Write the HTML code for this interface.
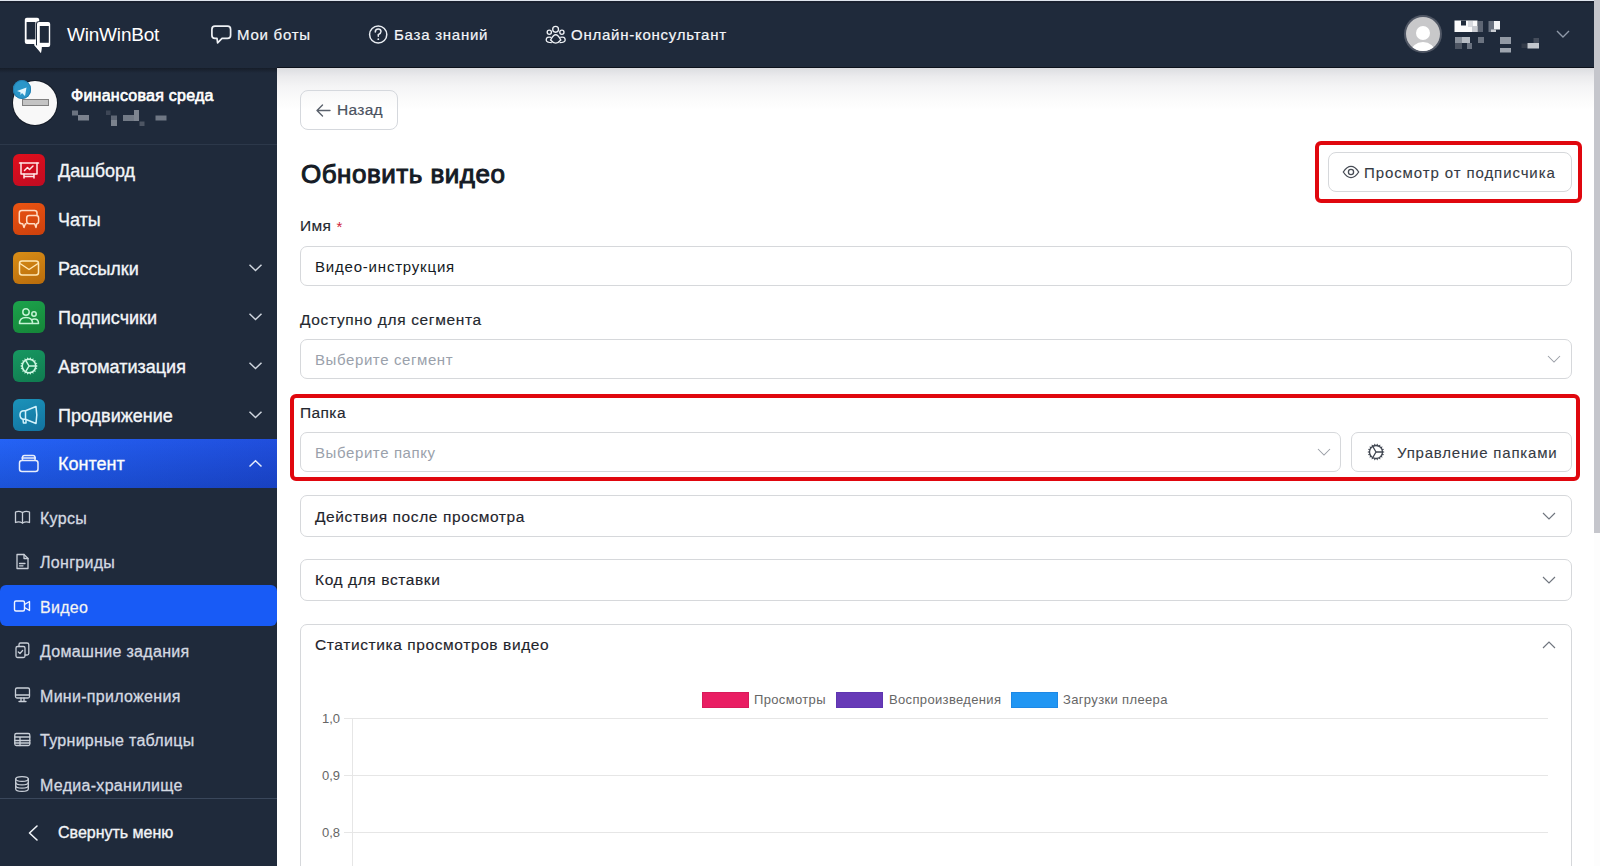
<!DOCTYPE html>
<html lang="ru">
<head>
<meta charset="utf-8">
<title>WinWinBot — Обновить видео</title>
<style>
*{box-sizing:border-box;margin:0;padding:0}
html,body{width:1600px;height:866px;overflow:hidden;background:#fff;font-family:"Liberation Sans",sans-serif}
.a{position:absolute}
.t{position:absolute;white-space:nowrap;line-height:1}
svg{position:absolute;overflow:visible}
#topline{left:0;top:0;width:1600px;height:1px;background:#dfe5ee}
#header{left:0;top:1px;width:1594px;height:67px;background:#1f2a3b}
#hedge{left:0;top:1px;width:1594px;height:2px;background:#1a2130}
#sidebar{left:0;top:68px;width:277px;height:798px;background:#1f2a3b}
#main{left:277px;top:68px;width:1317px;height:798px;background:#fff}
#shadow{left:277px;top:68px;width:1317px;height:42px;background:linear-gradient(#dcdde1,#ebebed 20%,#f5f5f6 45%,#fbfbfb 75%,#fff)}
#scroll{left:1594px;top:0;width:6px;height:866px;background:#fdfdfd}
#thumb{left:1594px;top:0;width:6px;height:533px;background:#c5c6cc}
.hn{color:#f4f6f9;font-size:15px;top:27px;letter-spacing:0.75px;-webkit-text-stroke:0.2px #f4f6f9}
.ibox{left:13px;width:32px;height:32px;border-radius:6px}
.mi{left:58px;font-size:18px;color:#f3f5f8;-webkit-text-stroke:0.35px #f3f5f8}
.si{left:40px;font-size:16px;color:#d4d9e1;letter-spacing:0.3px;-webkit-text-stroke:0.3px #d4d9e1}
.lbl{left:300px;font-size:15.5px;color:#24282f;-webkit-text-stroke:0.15px #24282f}
.box{position:absolute;border:1px solid #d6d8db;border-radius:7px;background:#fff}
.ph{font-size:15px;color:#9aa1ab}
.sb{-webkit-text-stroke:0.3px currentColor}
.acc{font-size:15.5px;color:#1f242c;-webkit-text-stroke:0.15px #1f242c}
.red{position:absolute;border:4px solid #e0070e;border-radius:6px}
</style>
</head>
<body>
<div class="a" id="main"></div>
<div class="a" id="shadow"></div>
<div class="a" id="sidebar"></div>
<div class="a" style="left:0;top:68px;width:277px;height:5px;background:linear-gradient(#161d29,rgba(31,42,59,0))"></div>
<div class="a" id="header"></div>
<div class="a" id="hedge"></div>
<div class="a" style="left:277px;top:67px;width:1317px;height:1px;background:#0d121c"></div>
<div class="a" id="topline"></div>
<div class="a" id="scroll"></div>
<div class="a" id="thumb"></div>
<!-- HEADER -->
<svg style="left:0;top:0" width="1" height="1">
 <rect x="24.8" y="17.8" width="14.4" height="26.2" rx="2" fill="#fff"/>
 <rect x="26.6" y="22" width="8.8" height="17.4" fill="#1f2a3b"/>
 <path d="M33 43L41 53L41.5 46Z" fill="#fff"/>
 <rect x="36" y="21.2" width="15" height="26.6" rx="2.4" fill="#1f2a3b"/>
 <rect x="37" y="22" width="13.2" height="25" rx="2" fill="#fff"/>
 <rect x="39.8" y="26" width="9" height="16.8" fill="#1f2a3b"/>
 <path d="M34 45L41 53L42 46Z" fill="#fff"/>
</svg>
<div class="t" style="left:67px;top:25px;font-size:19px;color:#fff;letter-spacing:-0.2px">WinWinBot</div>
<svg style="left:0;top:0" width="1" height="1">
 <path d="M215 26.2H227.5Q230.6 26.2 230.6 29.5V35.2Q230.6 38.4 227.5 38.4H222L217.6 42.8L217 38.4H215Q211.9 38.4 211.9 35.2V29.5Q211.9 26.2 215 26.2Z" fill="none" stroke="#eef1f5" stroke-width="1.7" stroke-linejoin="round"/>
 <circle cx="378.2" cy="34.5" r="8.6" fill="none" stroke="#e8ecf1" stroke-width="1.5"/>
 <path d="M375.3 32Q375.3 29 378.2 29Q381 29 381 31.6Q381 33.4 378.3 34.6V36.2" fill="none" stroke="#e8ecf1" stroke-width="1.5" stroke-linecap="round"/>
 <circle cx="378.3" cy="39.2" r="0.9" fill="#e8ecf1"/>
 <g fill="none" stroke="#eef1f5" stroke-width="1.35">
  <circle cx="555.6" cy="29.3" r="2.9"/>
  <circle cx="549.3" cy="32.3" r="2.1"/>
  <circle cx="561.9" cy="32.3" r="2.1"/>
  <path d="M550.6 40Q555.7 29.5 560.8 40Q555.7 46.2 550.6 40Z"/>
  <path d="M551.2 37.3Q546.3 36.2 546.2 40Q546.5 42.6 551.8 42.6"/>
  <path d="M560.2 37.3Q565.1 36.2 565.2 40Q564.9 42.6 559.6 42.6"/>
 </g>
</svg>
<div class="t hn" style="left:237px">Мои боты</div>
<div class="t hn" style="left:394px">База знаний</div>
<div class="t hn" style="left:571px">Онлайн-консультант</div>
<!-- user -->
<div class="a" style="left:1404px;top:15px;width:38px;height:38px;border-radius:50%;background:#505765"></div>
<div class="a" style="left:1406px;top:17px;width:34px;height:34px;border-radius:50%;background:#c8c8ca;overflow:hidden">
 <div class="a" style="left:10px;top:9px;width:14px;height:14px;border-radius:50%;background:#fff"></div>
 <div class="a" style="left:5px;top:25px;width:24px;height:20px;border-radius:50%;background:#fff"></div>
</div>
<svg style="left:0;top:0" width="1" height="1">
 <rect x="1454.5" y="20.5" width="23" height="11.5" fill="#fbfbfc"/>
 <rect x="1461" y="20.5" width="5" height="5" fill="#1f2a3b"/>
 <rect x="1468" y="21" width="5" height="6" fill="#d9dbe0"/>
 <rect x="1472" y="26" width="5.5" height="6" fill="#c9ccd2"/>
 <rect x="1478" y="21" width="5" height="11" fill="#5d6573"/>
 <rect x="1488.5" y="21" width="5.5" height="11" fill="#6a7280"/>
 <rect x="1494" y="21" width="6" height="8.5" fill="#f4f5f7"/>
 <rect x="1491" y="29.5" width="5" height="2.5" fill="#c8ccd2"/>
 <rect x="1455" y="37" width="7" height="6" fill="#8a919c"/>
 <rect x="1462" y="37" width="8" height="6" fill="#b7bcc4"/>
 <rect x="1455" y="43" width="7" height="6" fill="#4d5563"/>
 <rect x="1467" y="43" width="5" height="6" fill="#6a7280"/>
 <rect x="1478" y="37" width="6" height="6" fill="#6b7380"/>
 <rect x="1500" y="37" width="11" height="7" fill="#9299a4"/>
 <rect x="1500" y="48" width="11" height="4.5" fill="#9ea5af"/>
 <rect x="1533.5" y="38" width="5.5" height="5.5" fill="#454d5b"/>
 <rect x="1521.5" y="43.5" width="6" height="4.5" fill="#333b49"/>
 <rect x="1527.5" y="43" width="11.5" height="5.5" fill="#c3c7cd"/>
 <path d="M1557 31L1563 37L1569 31" fill="none" stroke="#8f99a8" stroke-width="1.4"/>
</svg>
<!-- SIDEBAR -->
<div class="a" style="left:12px;top:80px;width:46px;height:46px;border-radius:50%;background:#141b27"></div>
<div class="a" style="left:13px;top:81px;width:44px;height:44px;border-radius:50%;background:#f8f8f8"></div>
<div class="a" style="left:22px;top:99px;width:27px;height:7px;background:#c4c4c4;border:1px solid #808080"></div>
<div class="a" style="left:12.6px;top:80.4px;width:18.6px;height:18.6px;border-radius:50%;background:#2b96c9;box-shadow:inset 0 0 0 1px #237fb0"></div>
<svg style="left:22px;top:90.5px" width="1" height="1"><path d="M-5 0L4.5 -3.5L3 5L0 2L-1.5 4L-1.5 1.2Z" fill="#e3f6fd"/></svg>
<div class="t" style="left:71px;top:87.6px;font-size:16px;font-weight:400;color:#fff;letter-spacing:0.25px;-webkit-text-stroke:0.65px #fff">Финансовая среда</div>
<svg style="left:0;top:0" width="1" height="1">
 <rect x="72" y="110.5" width="6" height="5" fill="#6b7380"/>
 <rect x="78" y="115" width="11" height="5.5" fill="#7b828e"/>
 <rect x="106" y="110.5" width="4.5" height="4.5" fill="#3d4656"/>
 <rect x="111" y="115.5" width="6" height="4.5" fill="#5f6775"/>
 <rect x="111" y="120" width="6" height="6" fill="#7b828d"/>
 <rect x="123" y="115" width="11" height="6" fill="#727a86"/>
 <rect x="134" y="110" width="5" height="11" fill="#7e8590"/>
 <rect x="139.5" y="121.5" width="5" height="4.5" fill="#4d5563"/>
 <rect x="155.5" y="115.5" width="11" height="5" fill="#6f7784"/>
</svg>
<div class="a" style="left:0;top:144px;width:277px;height:1px;background:#2c384a"></div>
<div class="a ibox" style="top:154px;background:linear-gradient(160deg,#e00f1c,#c00b22)"></div>
<svg style="left:29px;top:170px" width="1" height="1"><g fill="none" stroke="#ffe6e6" stroke-width="1.5" stroke-linecap="round" stroke-linejoin="round"><path d="M-9.5-7H9.5"/><path d="M-8-7V4H8V-7"/><path d="M-5 4V8M5 4V8M-5 6.5H5"/><path d="M-4.5 0.5L-1.5-2.5L0.5-0.5L4-4"/></g></svg>
<div class="t mi" style="top:162px">Дашборд</div>
<div class="a ibox" style="top:203px;background:linear-gradient(160deg,#ea5412,#cc400c)"></div>
<svg style="left:29px;top:219px" width="1" height="1"><g fill="none" stroke="#ffdcc2" stroke-width="1.5" stroke-linejoin="round"><path d="M-2.3 4.7H-3.6L-5 8.4L-6.3 4.7H-7.2Q-9.7 4.7-9.7 2.2V-6.1Q-9.7-8.6-7.2-8.6H5.5Q8-8.6 8-6.1V-3.6"/><path d="M0.2-3.6H7.1Q9.6-3.6 9.6-1.1V2.2Q9.6 4.7 7.8 4.7L7 8.4L5.6 4.7H0.2Q-2.3 4.7-2.3 2.2V-1.1Q-2.3-3.6 0.2-3.6Z"/></g></svg>
<div class="t mi" style="top:211px">Чаты</div>
<div class="a ibox" style="top:252px;background:linear-gradient(160deg,#d98e17,#b86b0b)"></div>
<svg style="left:29px;top:268px" width="1" height="1"><g fill="none" stroke="#ffe7b3" stroke-width="1.5" stroke-linejoin="round"><rect x="-9.5" y="-7" width="19" height="14" rx="2.5"/><path d="M-9-4.5L0 1.5L9-4.5"/></g></svg>
<div class="t mi" style="top:260px">Рассылки</div>
<svg style="left:249px;top:264px" width="14" height="8"><path d="M0.5 0.8L6.5 6.5L12.5 0.8" fill="none" stroke="#cfd5de" stroke-width="1.5"/></svg>
<div class="a ibox" style="top:301px;background:linear-gradient(160deg,#1ca34c,#158538)"></div>
<svg style="left:29px;top:317px" width="1" height="1"><g fill="none" stroke="#c4f3d3" stroke-width="1.5" stroke-linejoin="round"><circle cx="-3" cy="-5" r="3.2"/><circle cx="5" cy="-3" r="2.2"/><path d="M-9.5 6.5Q-9.5 0.5-3 0.5Q3.5 0.5 3.5 6.5Z"/><path d="M3.5 6.5H9.5Q9.5 2 5.5 2Q4 2 2.5 2.8"/></g></svg>
<div class="t mi" style="top:309px">Подписчики</div>
<svg style="left:249px;top:313px" width="14" height="8"><path d="M0.5 0.8L6.5 6.5L12.5 0.8" fill="none" stroke="#cfd5de" stroke-width="1.5"/></svg>
<div class="a ibox" style="top:350px;background:linear-gradient(160deg,#179861,#107a4f)"></div>
<svg style="left:29px;top:366px" width="1" height="1"><g fill="none" stroke="#cdf7e2"><path d="M6.92 -1.05L9.00 0.00L6.92 1.05ZM6.86 1.38L8.46 3.08L6.15 3.35ZM5.97 3.65L6.89 5.79L4.63 5.25ZM4.37 5.47L4.50 7.79L2.55 6.52ZM2.23 6.63L1.56 8.86L0.17 7.00ZM-0.17 7.00L-1.56 8.86L-2.23 6.63ZM-2.55 6.52L-4.50 7.79L-4.37 5.47ZM-4.63 5.25L-6.89 5.79L-5.97 3.65ZM-6.15 3.35L-8.46 3.08L-6.86 1.38ZM-6.92 1.05L-9.00 0.00L-6.92 -1.05ZM-6.86 -1.38L-8.46 -3.08L-6.15 -3.35ZM-5.97 -3.65L-6.89 -5.79L-4.63 -5.25ZM-4.37 -5.47L-4.50 -7.79L-2.55 -6.52ZM-2.23 -6.63L-1.56 -8.86L-0.17 -7.00ZM0.17 -7.00L1.56 -8.86L2.23 -6.63ZM2.55 -6.52L4.50 -7.79L4.37 -5.47ZM4.63 -5.25L6.89 -5.79L5.97 -3.65ZM6.15 -3.35L8.46 -3.08L6.86 -1.38Z" fill="#cdf7e2" stroke="none"/><circle cx="0" cy="0" r="6.80" stroke-width="1.6"/><path d="M0 0L-3.30 -5.72M0 0H6.60M0 0L-3.30 5.72" stroke-width="1.5"/></g></svg>
<div class="t mi" style="top:358px">Автоматизация</div>
<svg style="left:249px;top:362px" width="14" height="8"><path d="M0.5 0.8L6.5 6.5L12.5 0.8" fill="none" stroke="#cfd5de" stroke-width="1.5"/></svg>
<div class="a ibox" style="top:399px;background:linear-gradient(160deg,#1b93ba,#12729f)"></div>
<svg style="left:29px;top:415px" width="1" height="1"><g fill="none" stroke="#d2f1fb" stroke-width="1.5" stroke-linejoin="round"><path d="M-3.5-4.2H-5Q-9-4.2-9 0Q-9 4.2-5 4.2H-3.5L7 8.5Q8.6 0 7-8.5Z"/><path d="M-3.5-4.2V4.2"/><path d="M-6 4.2L-5.6 8H-3V5"/></g></svg>
<div class="t mi" style="top:407px">Продвижение</div>
<svg style="left:249px;top:411px" width="14" height="8"><path d="M0.5 0.8L6.5 6.5L12.5 0.8" fill="none" stroke="#cfd5de" stroke-width="1.5"/></svg>
<div class="a" style="left:0;top:439px;width:277px;height:49px;background:linear-gradient(180deg,rgba(255,255,255,0.02),rgba(0,0,20,0.14)),linear-gradient(90deg,#2060f6,#1c4bdc)"></div>
<svg style="left:0;top:0" width="1" height="1"><g fill="none" stroke="#e8eefc" stroke-width="1.5" stroke-linejoin="round"><path d="M22.5 460V457.5Q22.5 455.5 24.5 455.5H33Q35 455.5 35 457.5V460"/><path d="M21.5 458H36"/><rect x="19.5" y="460.5" width="18.5" height="11" rx="2.5"/></g></svg>
<div class="t mi" style="top:455px;color:#fff">Контент</div>
<svg style="left:249px;top:460px" width="14" height="8"><path d="M0.5 6.5L6.5 0.8L12.5 6.5" fill="none" stroke="#e6ecfb" stroke-width="1.5"/></svg>
<div class="a" style="left:0;top:585px;width:277px;height:41px;border-radius:6px;background:#185bf6"></div>
<div class="t si" style="top:510.5px">Курсы</div>
<div class="t si" style="top:555.0px">Лонгриды</div>
<div class="t si" style="top:599.5px;color:#fff">Видео</div>
<div class="t si" style="top:644.0px">Домашние задания</div>
<div class="t si" style="top:688.5px">Мини-приложения</div>
<div class="t si" style="top:733.0px">Турнирные таблицы</div>
<div class="t si" style="top:777.5px">Медиа-хранилище</div>
<svg style="left:0;top:0" width="1" height="1"><g fill="none" stroke="#c9cfd8" stroke-width="1.3" stroke-linejoin="round" stroke-linecap="round"><path d="M15.5 512.0Q19 510.5 22.5 512.5Q26 510.5 29.5 512.0V522.5Q26 521.0 22.5 523.0Q19 521.0 15.5 522.5Z"/><path d="M22.5 512.5V523.0"/></g><g fill="none" stroke="#c9cfd8" stroke-width="1.3" stroke-linejoin="round" stroke-linecap="round"><path d="M17 554.5H24L28 558.5V568.5H17Z"/><path d="M24 554.5V558.5H28"/><path d="M19.5 563.5H25M19.5 565.8H23"/></g><g fill="none" stroke="#f1f5ff" stroke-width="1.4" stroke-linejoin="round"><rect x="14.5" y="601.0" width="10" height="10" rx="1.5"/><path d="M24.5 604.5L29.5 601.5V610.5L24.5 607.5"/></g><g fill="none" stroke="#c9cfd8" stroke-width="1.3" stroke-linejoin="round" stroke-linecap="round"><rect x="16" y="646.5" width="9" height="11" rx="1.5"/><path d="M19 646.5V644.5Q19 643.0 20.5 643.0H27Q28.8 643.0 28.8 644.5V653.5Q28.8 655.0 27 655.0H25"/><path d="M18.3 652.0L20 653.5L22.6 650.5"/></g><g fill="none" stroke="#c9cfd8" stroke-width="1.3" stroke-linejoin="round" stroke-linecap="round"><rect x="15.5" y="688.0" width="14" height="10" rx="1.5"/><path d="M15.5 695.0H29.5"/><path d="M21 698.0V701.0M24 698.0V701.0M19 701.5H26"/></g><g fill="none" stroke="#c9cfd8" stroke-width="1.3" stroke-linejoin="round" stroke-linecap="round"><rect x="14.8" y="733.5" width="15" height="12" rx="1.5"/><path d="M14.8 737.0H29.8M14.8 740.5H29.8M14.8 743.0H29.8M20 737.0V745.5"/></g><g fill="none" stroke="#c9cfd8" stroke-width="1.3" stroke-linejoin="round" stroke-linecap="round"><ellipse cx="22" cy="779.0" rx="6.3" ry="2.4"/><path d="M15.7 779.0V789.0Q15.7 791.4 22 791.4Q28.3 791.4 28.3 789.0V779.0"/><path d="M15.7 782.5Q15.7 784.9 22 784.9Q28.3 784.9 28.3 782.5M15.7 785.8Q15.7 788.2 22 788.2Q28.3 788.2 28.3 785.8"/></g></svg>
<div class="a" style="left:0;top:798px;width:277px;height:1px;background:#3a475b"></div>
<svg style="left:0;top:0" width="1" height="1"><path d="M37 826L29.5 833L37 840" fill="none" stroke="#f1f4f8" stroke-width="1.6" stroke-linecap="round" stroke-linejoin="round"/></svg>
<div class="t" style="left:58px;top:825px;font-size:16px;color:#f3f5f8;-webkit-text-stroke:0.35px #f3f5f8">Свернуть меню</div>
<!-- MAIN -->
<div class="box" style="left:300px;top:90px;width:98px;height:40px;border-radius:8px;border-color:#d5d8dd;background:transparent"></div>
<svg style="left:0;top:0" width="1" height="1"><path d="M330 110.5H317M322.5 105L317 110.5L322.5 116" fill="none" stroke="#5a616c" stroke-width="1.4" stroke-linecap="round" stroke-linejoin="round"/></svg>
<div class="t" style="left:337px;top:101.8px;font-size:15.5px;color:#4b5260;letter-spacing:0.3px;-webkit-text-stroke:0.2px #4b5260">Назад</div>

<div class="t" style="left:301px;top:161px;font-size:26px;font-weight:400;color:#151b26;letter-spacing:0.5px;-webkit-text-stroke:1px #151b26">Обновить видео</div>

<div class="red" style="left:1315px;top:141px;width:267px;height:62px"></div>
<div class="box" style="left:1328px;top:152px;width:244px;height:40px;border-radius:8px"></div>
<svg style="left:0;top:0" width="1" height="1"><g fill="none" stroke="#474c55" stroke-width="1.3"><path d="M1343.3 172Q1347 166.3 1351 166.3Q1355 166.3 1358.7 172Q1355 177.7 1351 177.7Q1347 177.7 1343.3 172Z"/><circle cx="1351" cy="172" r="2.6"/></g></svg>
<div class="t" style="left:1364px;top:165px;font-size:15px;color:#353a43;letter-spacing:0.9px;-webkit-text-stroke:0.1px #353a43">Просмотр от подписчика</div>

<div class="t lbl" style="top:217.5px;letter-spacing:0.3px">Имя</div>
<div class="t" style="left:336.5px;top:219px;font-size:15px;color:#cf2238">*</div>
<div class="box" style="left:300px;top:246px;width:1272px;height:40px"></div>
<div class="t" style="left:315px;top:259.3px;font-size:15px;color:#141a24;letter-spacing:0.8px">Видео-инструкция</div>

<div class="t lbl" style="top:312px;letter-spacing:0.65px">Доступно для сегмента</div>
<div class="box" style="left:300px;top:339px;width:1272px;height:40px"></div>
<div class="t ph" style="left:315px;top:352px;letter-spacing:0.6px">Выберите сегмент</div>
<svg style="left:0;top:0" width="1" height="1"><path d="M1548 356L1554 362L1560 356" fill="none" stroke="#9a9ea6" stroke-width="1.05"/></svg>

<div class="red" style="left:290px;top:394px;width:1290px;height:87px"></div>
<div class="t lbl" style="top:404.5px;letter-spacing:0.4px">Папка</div>
<div class="box" style="left:300px;top:432px;width:1041px;height:40px"></div>
<div class="t ph" style="left:315px;top:445px;letter-spacing:0.6px">Выберите папку</div>
<svg style="left:0;top:0" width="1" height="1"><path d="M1318 449L1324 455L1330 449" fill="none" stroke="#9a9ea6" stroke-width="1.05"/></svg>
<div class="box" style="left:1351px;top:432px;width:221px;height:40px"></div>
<svg style="left:0;top:0" width="1" height="1"><g fill="none" stroke="#3f4550"><path d="M1382.62 451.00L1384.60 452.00L1382.62 453.00ZM1382.57 453.32L1384.08 454.94L1381.88 455.21ZM1381.72 455.49L1382.59 457.53L1380.43 457.03ZM1380.18 457.24L1380.30 459.45L1378.45 458.24ZM1378.14 458.35L1377.49 460.47L1376.16 458.70ZM1375.84 458.70L1374.51 460.47L1373.86 458.35ZM1373.55 458.24L1371.70 459.45L1371.82 457.24ZM1371.57 457.03L1369.41 457.53L1370.28 455.49ZM1370.12 455.21L1367.92 454.94L1369.43 453.32ZM1369.38 453.00L1367.40 452.00L1369.38 451.00ZM1369.43 450.68L1367.92 449.06L1370.12 448.79ZM1370.28 448.51L1369.41 446.47L1371.57 446.97ZM1371.82 446.76L1371.70 444.55L1373.55 445.76ZM1373.86 445.65L1374.51 443.53L1375.84 445.30ZM1376.16 445.30L1377.49 443.53L1378.14 445.65ZM1378.45 445.76L1380.30 444.55L1380.18 446.76ZM1380.43 446.97L1382.59 446.47L1381.72 448.51ZM1381.88 448.79L1384.08 449.06L1382.57 450.68Z" fill="#3f4550" stroke="none"/><circle cx="1376" cy="452" r="6.50" stroke-width="1.3"/><path d="M1376 452L1372.80 446.46M1376 452H1382.40M1376 452L1372.80 457.54" stroke-width="1.3"/></g></svg>
<div class="t" style="left:1397px;top:445px;font-size:15px;color:#353a43;letter-spacing:0.8px;-webkit-text-stroke:0.1px #353a43">Управление папками</div>

<div class="box" style="left:300px;top:495px;width:1272px;height:42px"></div>
<div class="t acc" style="left:315px;top:508.5px;letter-spacing:0.6px">Действия после просмотра</div>
<svg style="left:0;top:0" width="1" height="1"><path d="M1543 513L1549 519L1555 513" fill="none" stroke="#6f757e" stroke-width="1.15"/></svg>

<div class="box" style="left:300px;top:559px;width:1272px;height:42px"></div>
<div class="t acc" style="left:315px;top:572px;letter-spacing:0.6px">Код для вставки</div>
<svg style="left:0;top:0" width="1" height="1"><path d="M1543 577L1549 583L1555 577" fill="none" stroke="#6f757e" stroke-width="1.15"/></svg>

<div class="box" style="left:300px;top:624px;width:1272px;height:300px"></div>
<div class="t acc" style="left:315px;top:637px;letter-spacing:0.6px">Статистика просмотров видео</div>
<svg style="left:0;top:0" width="1" height="1"><path d="M1543 648L1549 642L1555 648" fill="none" stroke="#6f757e" stroke-width="1.15"/></svg>

<!-- chart -->
<div class="a" style="left:702px;top:692px;width:47px;height:16px;background:#e91e63;border:1px solid #d81b5a"></div>
<div class="t" style="left:754px;top:693px;font-size:13px;color:#666;letter-spacing:0.35px">Просмотры</div>
<div class="a" style="left:836px;top:692px;width:47px;height:16px;background:#673ab7;border:1px solid #5e35b1"></div>
<div class="t" style="left:889px;top:693px;font-size:13px;color:#666;letter-spacing:0.35px">Воспроизведения</div>
<div class="a" style="left:1011px;top:692px;width:47px;height:16px;background:#2196f3;border:1px solid #1e88e5"></div>
<div class="t" style="left:1063px;top:693px;font-size:13px;color:#666;letter-spacing:0.35px">Загрузки плеера</div>
<div class="a" style="left:344px;top:718px;width:1204px;height:1px;background:#e6e6e6"></div>
<div class="a" style="left:344px;top:775px;width:1204px;height:1px;background:#e6e6e6"></div>
<div class="a" style="left:344px;top:832px;width:1204px;height:1px;background:#e6e6e6"></div>
<div class="a" style="left:352px;top:718px;width:1px;height:150px;background:#e6e6e6"></div>
<div class="t" style="left:322px;top:711.5px;font-size:13px;color:#666">1,0</div>
<div class="t" style="left:322px;top:768.5px;font-size:13px;color:#666">0,9</div>
<div class="t" style="left:322px;top:825.5px;font-size:13px;color:#666">0,8</div>
</body>
</html>
